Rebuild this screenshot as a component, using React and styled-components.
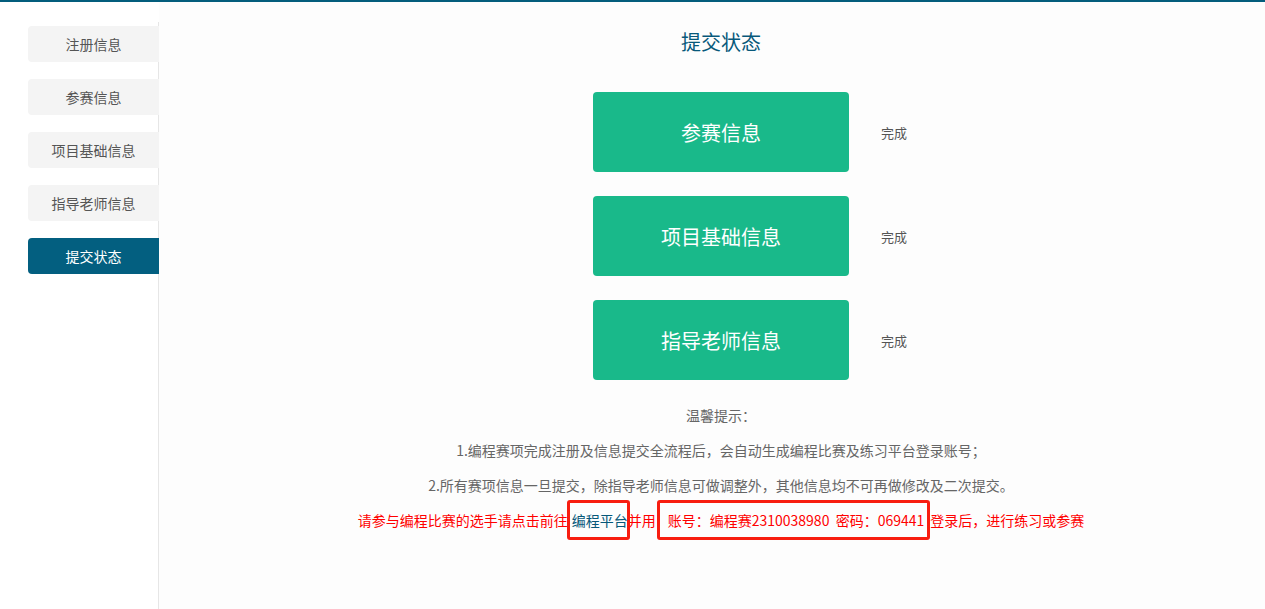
import React from "react";
import styled, { createGlobalStyle } from "styled-components";

const navItems = ["注册信息", "参赛信息", "项目基础信息", "指导老师信息", "提交状态"];
const steps = ["参赛信息", "项目基础信息", "指导老师信息"];

const GlobalStyle = createGlobalStyle`
  html, body {
    margin: 0;
    padding: 0;
    background: #fff;
    font-family: "Microsoft YaHei", "Noto Sans CJK SC", "Noto Sans", sans-serif;
  }
`;

const Page = styled.div`
  border-top: 2px solid #035d7c;
  display: flex;
  min-height: 607px;
`;

const Sidebar = styled.div`
  width: 130px;
  padding: 4px 0 0 28px;
  border-right: 1px solid #e6e6e6;
  margin-top: 20px;
  display: flex;
  flex-direction: column;
  gap: 17px;
`;

const NavItem = styled.div`
  height: 36px;
  line-height: 36px;
  margin-right: -1px;
  text-align: center;
  font-size: 14px;
  border-radius: 4px 0 0 4px;
  background: ${(p) => (p.$active ? "#035f80" : "#f4f4f4")};
  color: ${(p) => (p.$active ? "#fff" : "#555")};
`;

const Main = styled.div`
  flex: 1;
  padding: 26px 0 0 18px;
  background: #fdfdfd;
  display: flex;
  flex-direction: column;
  align-items: center;
`;

const Title = styled.h2`
  margin: 0;
  font-size: 20px;
  font-weight: normal;
  line-height: 28px;
  color: #07587a;
`;

const Steps = styled.div`
  margin-top: 36px;
  display: flex;
  flex-direction: column;
  gap: 24px;
  width: 100%;
`;

const StepRow = styled.div`
  display: grid;
  grid-template-columns: 1fr 256px 1fr;
  align-items: center;
`;

const StepButton = styled.div`
  grid-column: 2;
  height: 80px;
  border-radius: 4px;
  background: #19b98a;
  color: #fff;
  font-size: 20px;
  display: flex;
  align-items: center;
  justify-content: center;
`;

const Status = styled.span`
  padding-left: 32px;
  font-size: 13px;
  color: #555;
`;

const Tips = styled.div`
  margin-top: 18px;
  text-align: center;
  font-size: 14px;
  color: #666;
`;

const TipLine = styled.p`
  margin: 0;
  line-height: 35px;
  white-space: nowrap;
  color: ${(p) => (p.$warn ? "#ff0000" : "#666")};
`;

const Marked = styled.span`
  position: relative;
  color: ${(p) => p.$color || "inherit"};
  margin-left: ${(p) => p.$ml || 0}px;
  margin-right: ${(p) => p.$mr || 0}px;
  &::after {
    content: "";
    position: absolute;
    top: -10px;
    bottom: -10px;
    left: ${(p) => p.$padL}px;
    right: ${(p) => p.$padR}px;
    border: 3px solid #f81d10;
    border-radius: 3px;
  }
`;

export default function App() {
  return (
    <>
      <GlobalStyle />
      <Page>
        <Sidebar>
          {navItems.map((name, i) => (
            <NavItem key={name} $active={i === navItems.length - 1}>
              {name}
            </NavItem>
          ))}
        </Sidebar>
        <Main>
          <Title>提交状态</Title>
          <Steps>
            {steps.map((s) => (
              <StepRow key={s}>
                <StepButton>{s}</StepButton>
                <Status>完成</Status>
              </StepRow>
            ))}
          </Steps>
          <Tips>
            <TipLine>温馨提示：</TipLine>
            <TipLine>1.编程赛项完成注册及信息提交全流程后，会自动生成编程比赛及练习平台登录账号；</TipLine>
            <TipLine>2.所有赛项信息一旦提交，除指导老师信息可做调整外，其他信息均不可再做修改及二次提交。</TipLine>
            <TipLine $warn>
              请参与编程比赛的选手请点击前往
              <Marked $color="#07587a" $ml={4} $padL={-5} $padR={-2}>编程平台</Marked>
              并用
              <Marked $ml={12} $mr={6} $padL={-11} $padR={-6}>
                账号：编程赛2310038980&nbsp;&nbsp;密码：069441
              </Marked>
              登录后，进行练习或参赛
            </TipLine>
          </Tips>
        </Main>
      </Page>
    </>
  );
}
